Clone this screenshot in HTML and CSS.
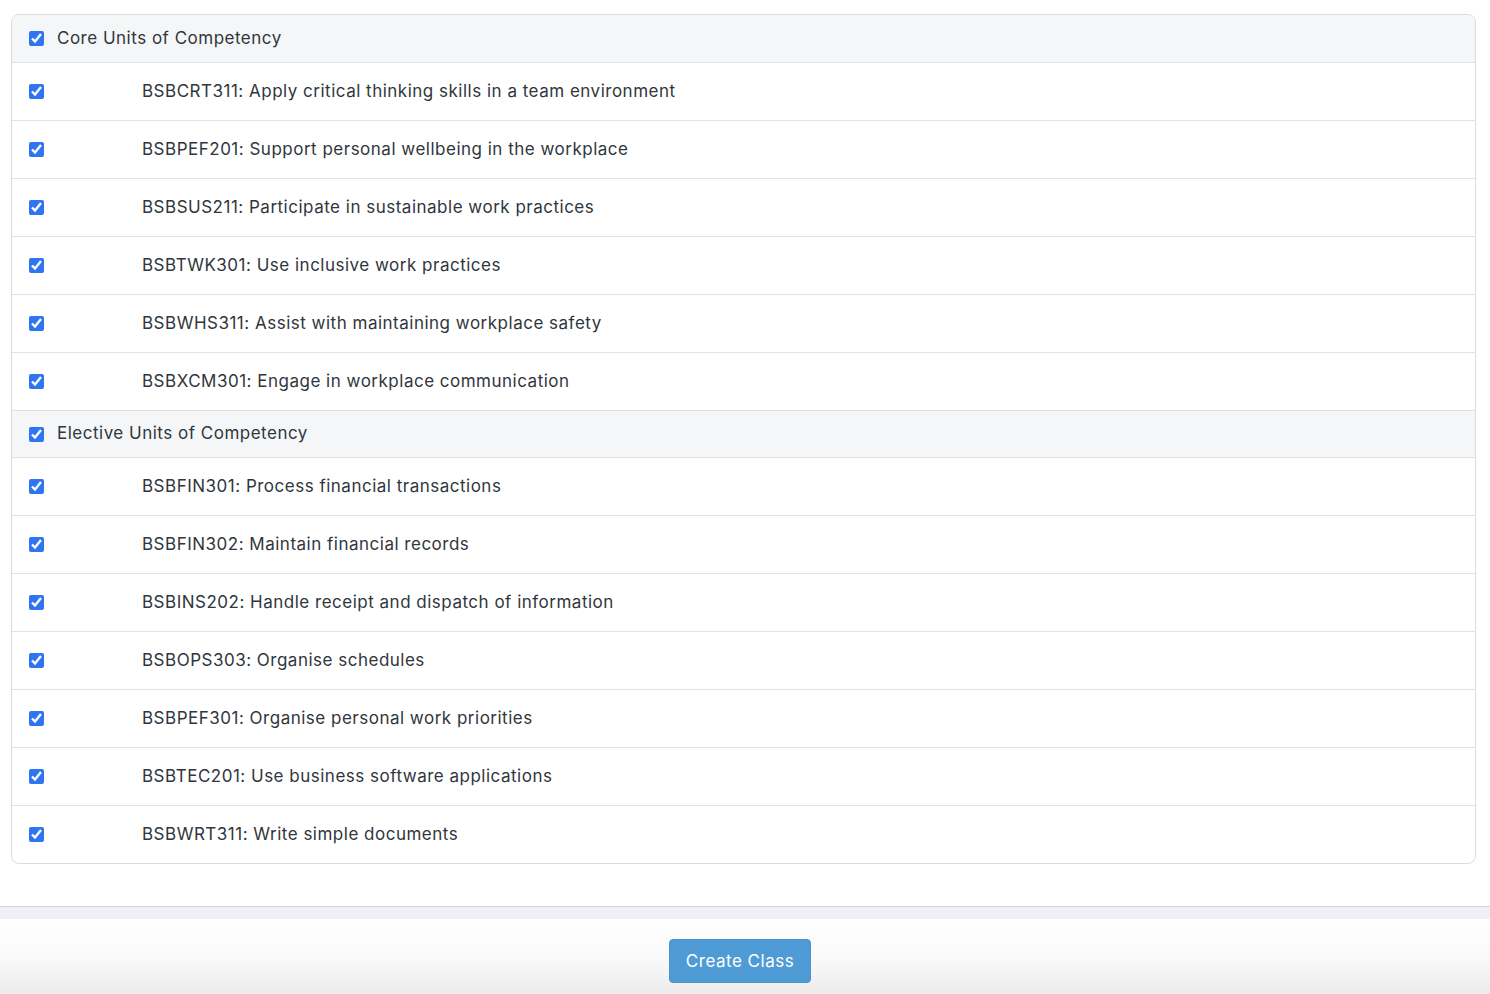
FILE: index.html
```html
<!DOCTYPE html>
<html lang="en">
<head>
<meta charset="UTF-8" />
<meta name="viewport" content="width=device-width, initial-scale=1" />
<title>Create Class</title>
<link rel="stylesheet" href="styles.css">
</head>
<body>

<div class="panel">
  <div class="units">
    <label class="group-row"><input type="checkbox" checked /><span>Core Units of Competency</span></label>
    <label class="unit-row"><input type="checkbox" checked /><span>BSBCRT311: Apply critical thinking skills in a team environment</span></label>
    <label class="unit-row"><input type="checkbox" checked /><span>BSBPEF201: Support personal wellbeing in the workplace</span></label>
    <label class="unit-row"><input type="checkbox" checked /><span>BSBSUS211: Participate in sustainable work practices</span></label>
    <label class="unit-row"><input type="checkbox" checked /><span>BSBTWK301: Use inclusive work practices</span></label>
    <label class="unit-row"><input type="checkbox" checked /><span>BSBWHS311: Assist with maintaining workplace safety</span></label>
    <label class="unit-row"><input type="checkbox" checked /><span>BSBXCM301: Engage in workplace communication</span></label>

    <label class="group-row"><input type="checkbox" checked /><span>Elective Units of Competency</span></label>
    <label class="unit-row"><input type="checkbox" checked /><span>BSBFIN301: Process financial transactions</span></label>
    <label class="unit-row"><input type="checkbox" checked /><span>BSBFIN302: Maintain financial records</span></label>
    <label class="unit-row"><input type="checkbox" checked /><span>BSBINS202: Handle receipt and dispatch of information</span></label>
    <label class="unit-row"><input type="checkbox" checked /><span>BSBOPS303: Organise schedules</span></label>
    <label class="unit-row"><input type="checkbox" checked /><span>BSBPEF301: Organise personal work priorities</span></label>
    <label class="unit-row"><input type="checkbox" checked /><span>BSBTEC201: Use business software applications</span></label>
    <label class="unit-row"><input type="checkbox" checked /><span>BSBWRT311: Write simple documents</span></label>
  </div>
</div>

<div class="band"></div>

<div class="footer">
  <button class="create-btn">Create Class</button>
</div>

</body>
</html>
```

FILE: styles.css
```css
body {
  margin: 0;
  font-family: Inter, "Noto Sans", sans-serif;
  color: #2f363d;
  background: #fff;
}
.panel {
  background: #fff;
  padding: 14px 14px 42px 11px;
  border-bottom-right-radius: 6px;
}
.units {
  border: 1px solid #dcdcdc;
  border-radius: 8px;
  overflow: hidden;
}
.group-row, .unit-row {
  display: flex;
  align-items: center;
  padding-left: 17px;
  padding-bottom: 2px;
  font-size: 17px;
  letter-spacing: 0.5px;
  border-bottom: 1px solid #e2e2e2;
  box-sizing: border-box;
}
.units label:last-child {
  border-bottom: none;
  height: 57px;
}
.group-row {
  height: 47px;
  background: #f5f6f8;
}
.units .group-row:first-child {
  height: 48px;
}
.unit-row {
  height: 58px;
}
input[type="checkbox"] {
  width: 15px;
  height: 15px;
  margin: 2px 0 0;
  accent-color: #2f74f0;
  flex: none;
}
.group-row span {
  margin-left: 13px;
}
.unit-row span {
  margin-left: 98px;
}
.band {
  height: 12px;
  border-top: 1px solid #cdd2d9;
  background: #eef0f3;
}
.footer {
  height: 75px;
  display: flex;
  justify-content: center;
  padding-top: 20px;
  box-sizing: border-box;
  background: linear-gradient(#fff, #fafafa 50%, #ececec);
}
.create-btn {
  width: 142px;
  height: 44px;
  margin-right: 10px;
  background: #4f9bd5;
  color: #fff;
  border: 1px solid #4a93cc;
  border-radius: 4px;
  font-family: Inter, "Noto Sans", sans-serif;
  font-size: 17px;
  letter-spacing: 0.5px;
  padding: 0;
}
```
